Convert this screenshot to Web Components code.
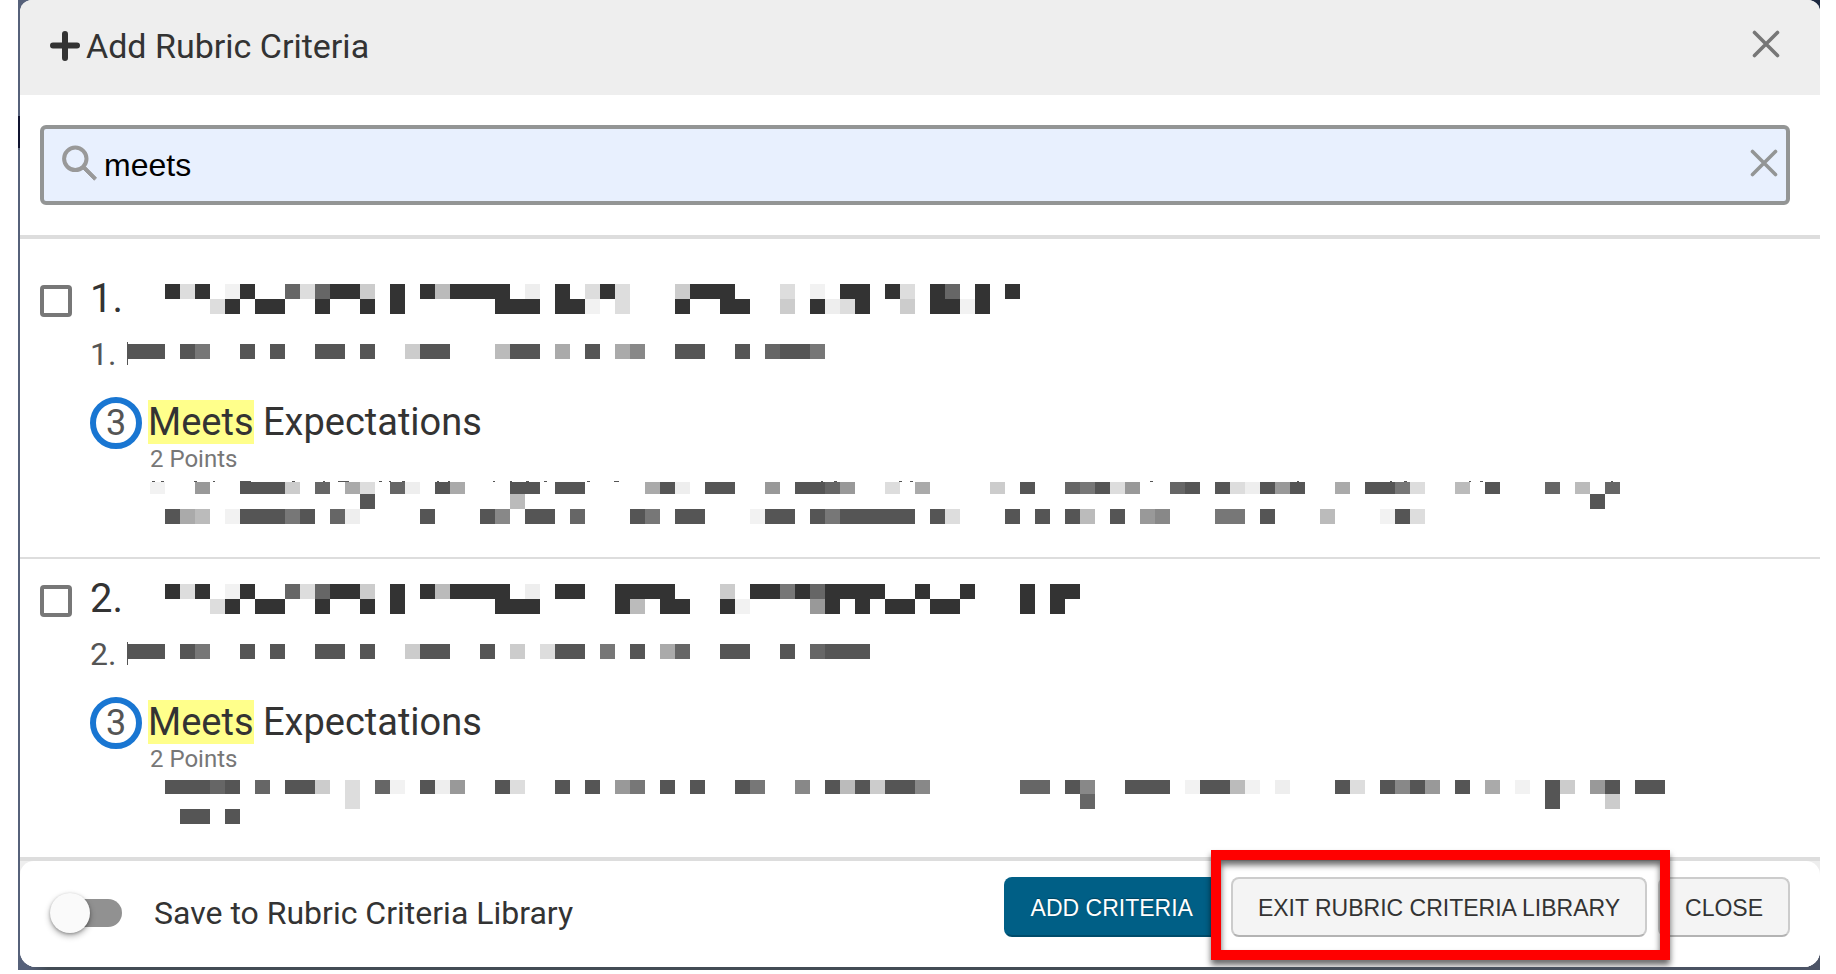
<!DOCTYPE html>
<html lang="en">
<head>
<meta charset="utf-8">
<title>Add Rubric Criteria</title>
<style>
  body { margin: 0; background: #fff; font-family: Roboto, "Liberation Sans", sans-serif; color: #333; }
</style>
</head>
<body>
<rubric-dialog>
  <rubric-header slot="header">Add Rubric Criteria</rubric-header>
  <criteria-search slot="search" value="meets"></criteria-search>

  <criteria-item number="1">
    <redacted-text slot="name" width="885" height="30" rows="
      0,15,0,3d3.f3..6d633c.3.3b3333.e.3.d3d...c333...d.f.33.3d.36.3.3;
      15,15,45,d3.33..3..3.3......333.33f.d...3..33..c.3ed3..c.33f3"></redacted-text>
    <redacted-text slot="outcome" width="740" height="23" bars="0,0,1,23;1,2,37,15" rows="
      2,15,53,57..5.5..55.5..c55...b55.a.5.a8..55..5.6557"></redacted-text>
    <rating-level slot="rating" level="3" points="2 Points"><mark>Meets</mark> Expectations</rating-level>
    <redacted-text slot="description" width="1515" height="44"
      bars="2,1,3,1;11,1,3,1;44,1,3,1;63,1,2,1;90,1,11,1;142,1,3,1;173,1,2,1;188,1,11,1;229,1,3,1;239,1,2,1;252,1,3,1;287,1,2,1;298,1,2,1;343,1,2,1;360,1,2,1;376,1,3,1;394,1,3,1;437,1,3,1;464,1,5,1;671,1,2,1;684,1,3,1;749,1,3,1;760,1,3,1;1000,1,3,1;1147,1,2,1;1240,1,2,1;1254,1,3,1;1319,1,2,1;1330,1,3,1;1461,1,2,1" rows="
      2,12,0,f..9..555c.6.ad.6e.5a...55.55....a5e.55..9.5569..d.a....c.5..675d9..65.5de595..a.557d..b.5...6.b.6;
      14,15,210,5.........b;
      14,15,1440,5;
      29,15,15,5ab.f55575.6e....5...58.55.6...57.55...f55.5755555.5d...5.5.5b.5.98...77.5...b...f5d"></redacted-text>
  </criteria-item>

  <criteria-item number="2">
    <redacted-text slot="name" width="930" height="30" rows="
      0,15,0,3d3.f3..6d633c.3.3b3333.e.33..3333...c.337363333..3..3...3.33;
      15,15,45,d3.33..3..3.3......333.....3b.33..3f....93.3.33.33....3.3"></redacted-text>
    <redacted-text slot="outcome" width="770" height="23" bars="0,0,1,23;1,2,37,15" rows="
      2,15,53,57..5.5..55.5..c55..5.c.d55.7.5.a6..55..5.6555"></redacted-text>
    <rating-level slot="rating" level="3" points="2 Points"><mark>Meets</mark> Expectations</rating-level>
    <redacted-text slot="description" width="1515" height="44" rows="
      0,14,15,55565.6.55c.d.6f.5e9..5d..5.5.97.5.5..57..8.5b5c558......66.58..555.f55bf.e...5d.5859.5.a.f.5c.95.55;
      14,15,195,d;
      14,15,930,6;
      14,15,1395,5...c;
      29,15,30,55.5"></redacted-text>
  </criteria-item>

  <rubric-footer slot="footer">
    <toggle-switch slot="toggle">Save to Rubric Criteria Library</toggle-switch>
    <push-button primary>ADD CRITERIA</push-button>
    <call-out><push-button>EXIT RUBRIC CRITERIA LIBRARY</push-button></call-out>
    <push-button>CLOSE</push-button>
  </rubric-footer>
</rubric-dialog>

<script>
const define = (name, render, after) => customElements.define(name, class extends HTMLElement {
  connectedCallback() {
    if (this.shadowRoot) return;
    this.attachShadow({ mode: "open" }).innerHTML = render(this);
    if (after) after(this);
  }
});

define("rubric-dialog", () => `
  <style>
    :host { display: block; margin: 0 16px 4px 18px; padding: 0 0 3px 2px;
      background:
        linear-gradient(#101430, #101430) 0 116px / 2px 32px no-repeat,
        linear-gradient(90deg, #56617a, #56617a 10px, #434c55 30px, #434c55 calc(100% - 600px), #4c5466) 0 100% / 100% 20px no-repeat,
        linear-gradient(90deg, #56617a 50%, #1d2940 50%); }
    section { background: #fff; border-radius: 12px 12px 16px 16px; overflow: hidden; }
    .search { padding: 30px 30px 30px 20px; border-bottom: 4px solid #ddd; }
    .list { padding-top: 20px; }
    .foot { background: #eee; border-top: 4px solid #ddd; }
  </style>
  <section role="dialog" aria-label="Add Rubric Criteria">
    <slot name="header"></slot>
    <div class="search"><slot name="search"></slot></div>
    <div class="list"><slot></slot></div>
    <div class="foot"><slot name="footer"></slot></div>
  </section>`);

define("rubric-header", () => `
  <style>
    :host { display: flex; align-items: center; background: #eee; padding: 26px 40px 29px 30px; }
    h1 { flex: 1; margin: 0 0 0 6px; font-size: 34px; line-height: 40px; font-weight: 400; }
    svg { display: block; }
    button { border: 0; padding: 0 0 4px; background: none; }
  </style>
  <svg width="30" height="30" viewBox="0 0 30 30"><path d="M15 3V27M3 14.500H27" stroke="#333" stroke-width="6" stroke-linecap="round"/></svg>
  <h1><slot></slot></h1>
  <button aria-label="Close dialog"><svg width="28" height="28" viewBox="0 0 28 28"><path d="M2.500 2.500L25.500 25.500M25.500 2.500L2.500 25.500" stroke="#777" stroke-width="3.600" stroke-linecap="round"/></svg></button>`);

define("criteria-search", el => `
  <style>
    :host { display: flex; align-items: center; height: 72px; border: 4px solid #939595; border-radius: 6px;
      background: #e8f0fe; padding: 0 8px 0 18px; }
    svg { display: block; flex: none; }
    input { flex: 1; min-width: 0; margin: 0 7px; padding: 0; border: 0; outline: 0; background: none; color: #000;
      font: 32px/36px "Liberation Sans", sans-serif; }
    button, label { border: 0; padding: 0 0 4px; background: none; }
  </style>
  <label for="q" aria-label="Search criteria"><svg width="35" height="36" viewBox="0 0 35 36"><circle cx="13.300" cy="13.800" r="11.200" fill="none" stroke="#999" stroke-width="4"/><path d="M21 22L23.500 21.700L34.500 32.800L32.300 35.200L21.200 24.200Z" fill="#999" stroke="#999"/></svg></label>
  <input id="q" type="text" value="${el.getAttribute("value")}">
  <button aria-label="Clear search"><svg width="28" height="28" viewBox="0 0 28 28"><path d="M2.500 2.500L25.500 25.500M25.500 2.500L2.500 25.500" stroke="#939595" stroke-width="3.600" stroke-linecap="round"/></svg></button>`);

define("criteria-item", el => `
  <style>
    :host { display: flex; gap: 18px; padding: 15px 20px 33px; border-bottom: 2px solid #ddd; }
    :host(:last-of-type) { border-bottom: 0; }
    input { appearance: none; flex: none; box-sizing: border-box; width: 32px; height: 32px; margin: 11px 0 0;
      border: 4px solid #777; border-radius: 4px; background: #fff; }
    .content { flex: 1; min-width: 0; }
    .row { display: flex; }
    .name { font-size: 40px; line-height: 50px; }
    .name label { width: 75px; }
    .name slot { display: block; margin-top: 10px; }
    .outcome { margin: 10px 0 23px; font-size: 32px; line-height: 40px; color: #555; }
    .outcome span { width: 37px; }
    .outcome slot { display: block; margin-top: 8px; }
    .description { margin: 7px 0 0 60px; }
  </style>
  <input type="checkbox" id="pick">
  <div class="content">
    <div class="row name"><label for="pick">${el.getAttribute("number")}.</label><slot name="name"></slot></div>
    <div class="row outcome"><span>${el.getAttribute("number")}.</span><slot name="outcome"></slot></div>
    <slot name="rating"></slot>
    <div class="description"><slot name="description"></slot></div>
  </div>`);

define("rating-level", el => `
  <style>
    :host { display: flex; gap: 6px; height: 76px; }
    .badge { flex: none; box-sizing: border-box; width: 52px; height: 52px; border: 6px solid #1976d2; border-radius: 50%;
      font-size: 36px; line-height: 40px; text-align: center; color: #555; }
    .text { padding-top: 2px; }
    .title { font-size: 38px; line-height: 46px; }
    .points { padding-left: 2px; font-size: 24px; line-height: 28px; color: #777; }
    ::slotted(mark) { background: #ffff8b; color: inherit; }
  </style>
  <div class="badge">${el.getAttribute("level")}</div>
  <div class="text">
    <div class="title"><slot></slot></div>
    <div class="points">${el.getAttribute("points")}</div>
  </div>`);

/* Pixelated text. rows: "top,height,left,cells" where each cell is 15px wide and its hex digit is a grey level;
   bars: "left,top,width,height" for solid pieces off the cell grid. */
define("redacted-text", el => {
  const rect = (x, y, w, h, fill) => `<rect x="${x}" y="${y}" width="${w}" height="${h}" fill="${fill}"/>`;
  let out = "";
  for (const bar of (el.getAttribute("bars") || "").split(";").filter(Boolean)) {
    out += rect(...bar.split(","), "#555");
  }
  for (const row of el.getAttribute("rows").split(";")) {
    const [y, h, x, cells] = row.trim().split(",");
    [...cells].forEach((c, i) => {
      if (c !== ".") out += rect(+x + i * 15, y, 15, h, c === "f" ? "#f2f2f2" : "#" + c + c + c);
    });
  }
  return `
  <style>:host { display: block; } svg { display: block; }</style>
  <svg width="${el.getAttribute("width")}" height="${el.getAttribute("height")}" shape-rendering="crispEdges" aria-hidden="true">${out}</svg>`;
});

define("rubric-footer", () => `
  <style>
    :host { display: flex; align-items: flex-start; gap: 11px; padding: 16px 30px 30px; background: #fff;
      border-radius: 14px 14px 0 0; }
    .toggle { flex: 1; padding-top: 16px; }
  </style>
  <div class="toggle"><slot name="toggle"></slot></div>
  <slot></slot>`);

define("toggle-switch", () => `
  <style>
    :host { display: flex; align-items: center; }
    input { appearance: none; display: grid; align-items: center; width: 72px; height: 40px; margin: 0; }
    input::before, input::after { content: ""; grid-area: 1 / 1; }
    input::before { height: 28px; margin-left: 4px; border-radius: 14px; background: #919191; }
    input::after { width: 40px; height: 40px; border-radius: 50%; background: #fafafa; box-shadow: 0 3px 6px rgba(0,0,0,.3), 0 1px 3px rgba(0,0,0,.25); }
    label { margin-left: 32px; font-size: 32px; line-height: 40px; }
  </style>
  <input type="checkbox" role="switch" id="save"><label for="save"><slot></slot></label>`);

define("push-button", () => `
  <style>
    :host { display: block; }
    button { display: block; box-sizing: border-box; height: 60px; padding: 2px 25px 0; border: 2px solid #ccc; border-bottom-color: #b3b3b3;
      border-radius: 8px; background: #f4f4f4; color: #333; font: 23px/28px "Liberation Sans", sans-serif; white-space: nowrap; }
    :host([primary]) button { background: #005f86; border-color: #005f86; border-bottom-color: #004c6b; color: #fff;
      text-shadow: 0 -1px 1px rgba(0,0,0,.3); }
  </style>
  <button type="button"><slot></slot></button>`);

/* Red frame laid over the control it points out. */
define("call-out", () => `
  <style>
    :host { display: block; position: relative; }
    .frame { position: absolute; z-index: 1; inset: -27px -23px -23px -20px; border: 10px solid #f00; pointer-events: none;
      filter: drop-shadow(0 5px 3px rgba(0,0,0,.6)); }
  </style>
  <slot></slot><div class="frame"></div>`);
</script>
</body>
</html>
